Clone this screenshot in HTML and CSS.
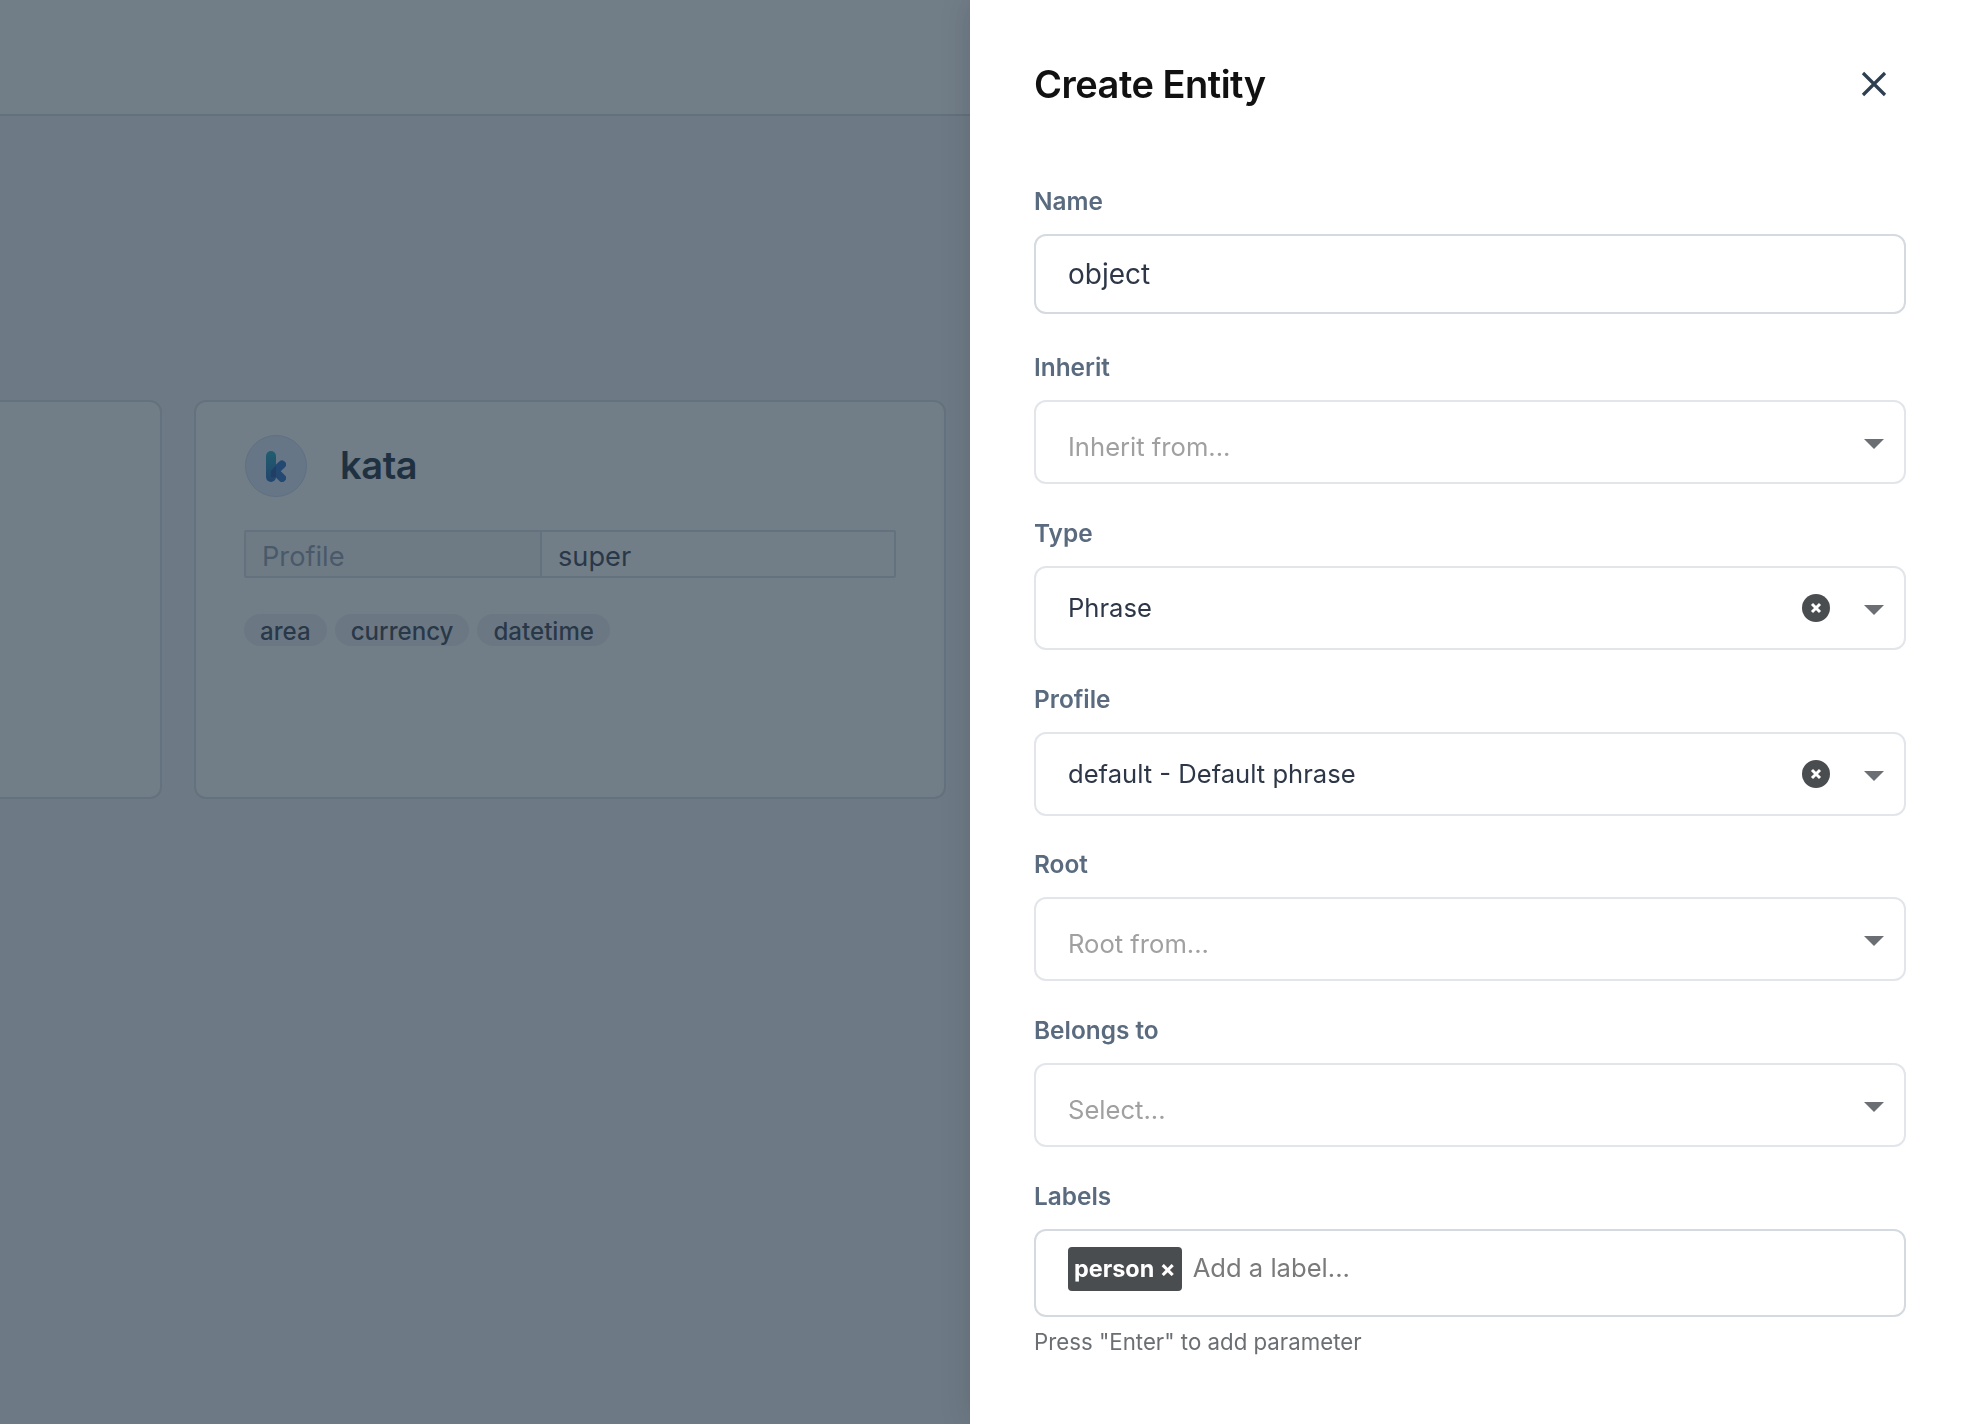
FILE: index.html
```html
<!DOCTYPE html>
<html>
<head>
	<title>Create Entity</title>
	<link rel="stylesheet" href="styles.css">
</head>
<body>
	<div class="page">
		<div class="topbar"></div>
		<div class="cards">
			<div class="card card-cut"></div>
			<div class="card">
				<div class="card-head">
					<span class="avatar">
						<svg width="20" height="31" viewBox="0 0 20 31">
							<defs>
								<linearGradient id="kbar" x1="0" y1="0" x2="0" y2="1">
									<stop offset="0" stop-color="#16a3b8"/>
									<stop offset="1" stop-color="#1a5cb4"/>
								</linearGradient>
							</defs>
							<path d="M9 20 L16 13.5 M9 20 L16 27" stroke="#1b64c0" stroke-width="8" stroke-linecap="round" fill="none"/>
							<rect x="0" y="0" width="10" height="31" rx="5" fill="url(#kbar)"/>
							<path d="M10 14.5 L5 20 V26 a5 5 0 0 0 5 -0.5 Z" fill="#15479c"/>
						</svg>
					</span>
					<span class="card-name">kata</span>
				</div>
				<div class="info">
					<div class="info-key">Profile</div>
					<div class="info-val">super</div>
				</div>
				<div class="tags">
					<span class="tag">area</span>
					<span class="tag">currency</span>
					<span class="tag">datetime</span>
				</div>
			</div>
		</div>
	</div>
	<div class="overlay"></div>
	<aside class="panel">
		<div class="panel-head">
			<h2>Create Entity</h2>
			<svg class="close" width="28" height="28" viewBox="0 0 28 28"><path d="M3 3 L25 25 M25 3 L3 25" stroke="#2d3f50" stroke-width="3.2" fill="none"/></svg>
		</div>
		<form>
			<div class="field field-name">
				<label>Name</label>
				<div class="control control-input"><span class="value">object</span></div>
			</div>
			<div class="field">
				<label>Inherit</label>
				<div class="control control-select">
					<span class="placeholder">Inherit from...</span>
					<span class="caret"></span>
				</div>
			</div>
			<div class="field">
				<label>Type</label>
				<div class="control control-select">
					<span class="selected">Phrase</span>
					<svg class="clear" width="28" height="28" viewBox="0 0 28 28"><circle cx="14" cy="14" r="14" fill="#4a4d50"/><path d="M10 10 L18 18 M18 10 L10 18" stroke="#fff" stroke-width="3"/></svg>
					<span class="caret"></span>
				</div>
			</div>
			<div class="field">
				<label>Profile</label>
				<div class="control control-select">
					<span class="selected">default - Default phrase</span>
					<svg class="clear" width="28" height="28" viewBox="0 0 28 28"><circle cx="14" cy="14" r="14" fill="#4a4d50"/><path d="M10 10 L18 18 M18 10 L10 18" stroke="#fff" stroke-width="3"/></svg>
					<span class="caret"></span>
				</div>
			</div>
			<div class="field">
				<label>Root</label>
				<div class="control control-select">
					<span class="placeholder">Root from...</span>
					<span class="caret"></span>
				</div>
			</div>
			<div class="field">
				<label>Belongs to</label>
				<div class="control control-select">
					<span class="placeholder">Select...</span>
					<span class="caret"></span>
				</div>
			</div>
			<div class="field">
				<label>Labels</label>
				<div class="control control-labels">
					<span class="chip">person ×</span>
					<span class="add-label">Add a label...</span>
				</div>
				<p class="hint">Press "Enter" to add parameter</p>
			</div>
		</form>
	</aside>
</body>
</html>
```

FILE: styles.css
```css
* {
	box-sizing: border-box;
}
html, body {
	height: 100%;
}
body {
	margin: 0;
	font-family: Inter, "Liberation Sans", sans-serif;
	background-color: #f4f6f8;
	overflow: hidden;
}

/* page behind the drawer */
.page {
	height: 100%;
}
.topbar {
	height: 116px;
	background-color: #fff;
	border-bottom: 2px solid #d5dbe2;
}
.cards {
	display: flex;
	gap: 32px;
	margin-top: 284px;
	margin-left: -590px;
}
.card {
	flex: none;
	width: 752px;
	height: 399px;
	padding: 33px 48px;
	background-color: #fff;
	border: 2px solid #d8dde4;
	border-radius: 12px;
}
.card-head {
	display: flex;
	align-items: center;
	gap: 33px;
}
.avatar {
	display: flex;
	align-items: center;
	justify-content: center;
	width: 62px;
	height: 62px;
	margin-left: 1px;
	border: 1px solid #c9d8ec;
	border-radius: 50%;
	background-color: #dfeafb;
}
.card-name {
	margin-top: -2px;
	font-size: 38px;
	font-weight: 600;
	color: #0f2233;
	letter-spacing: -0.4px;
}
.info {
	display: flex;
	height: 48px;
	margin-top: 33px;
	border: 2px solid #d8dde4;
	border-radius: 2px;
	font-size: 27.2px;
}
.info-key {
	width: 296px;
	padding-left: 16px;
	background-color: #f7f8fa;
	border-right: 2px solid #d8dde4;
	color: #8a97a8;
	line-height: 50px;
}
.info-val {
	padding-left: 16px;
	color: #2d3748;
	line-height: 50px;
}
.tags {
	display: flex;
	gap: 8px;
	margin-top: 36px;
}
.tag {
	padding: 0 16px;
	height: 32px;
	border-radius: 16px;
	background-color: #edf0f4;
	color: #2d3748;
	font-size: 24.1px;
	font-weight: 500;
	line-height: 35px;
}

.overlay {
	position: fixed;
	top: 0;
	left: 0;
	right: 0;
	bottom: 0;
	background-color: rgba(40, 57, 73, 0.66);
}

/* drawer */
.panel {
	position: fixed;
	top: 0;
	right: 0;
	bottom: 0;
	width: 1000px;
	padding: 0 65px 0 64px;
	background-color: #fff;
	box-shadow: 0 0 30px rgba(0, 0, 0, 0.14);
}
.panel-head {
	display: flex;
	align-items: center;
	justify-content: space-between;
	height: 168px;
	margin-bottom: 18px;
	padding-right: 17px;
}
.panel-head h2 {
	margin: 0;
	font-size: 38px;
	font-weight: 600;
	color: #111;
	letter-spacing: -0.5px;
}
form {
	margin-right: -1px;
}
.field {
	margin-bottom: 33.8px;
}
.field-name {
	margin-bottom: 38px;
}
.field label {
	display: block;
	margin-bottom: 18px;
	font-size: 24.4px;
	font-weight: 600;
	line-height: 30px;
	color: #5a6b7f;
}
.control {
	display: flex;
	align-items: center;
	height: 84px;
	padding: 0 32px;
	background-color: #fff;
	border: 2px solid #e2e6ea;
	border-radius: 12px;
	font-size: 25.6px;
}
.control-input {
	height: 80px;
	border-color: #d5dae0;
	font-size: 28px;
}
.value, .selected {
	color: #2d3748;
}
.placeholder {
	margin-top: 8px;
	color: #a0a0a0;
}
.clear {
	margin-left: auto;
}
.caret {
	width: 0;
	height: 0;
	margin-left: 34px;
	margin-top: 4px;
	border-left: 10px solid transparent;
	border-right: 10px solid transparent;
	border-top: 10px solid #6b6f73;
}
.clear + .caret {
	margin-top: 5px;
}
.control-select {
	padding-right: 20px;
}
.placeholder + .caret {
	margin-left: auto;
}
.control-labels {
	height: 88px;
	border-color: #d5dae0;
}
.chip {
	padding: 0 6px;
	height: 44px;
	line-height: 44px;
	margin-top: -8px;
	background-color: #4a4d50;
	border-radius: 4px;
	color: #fff;
	font-size: 23.4px;
	font-weight: 700;
}
.add-label {
	margin-left: 11px;
	margin-top: -10px;
	color: #7a7a7a;
}
.hint {
	margin: 11px 0 0;
	font-size: 22.25px;
	color: #6b6f73;
}
```
